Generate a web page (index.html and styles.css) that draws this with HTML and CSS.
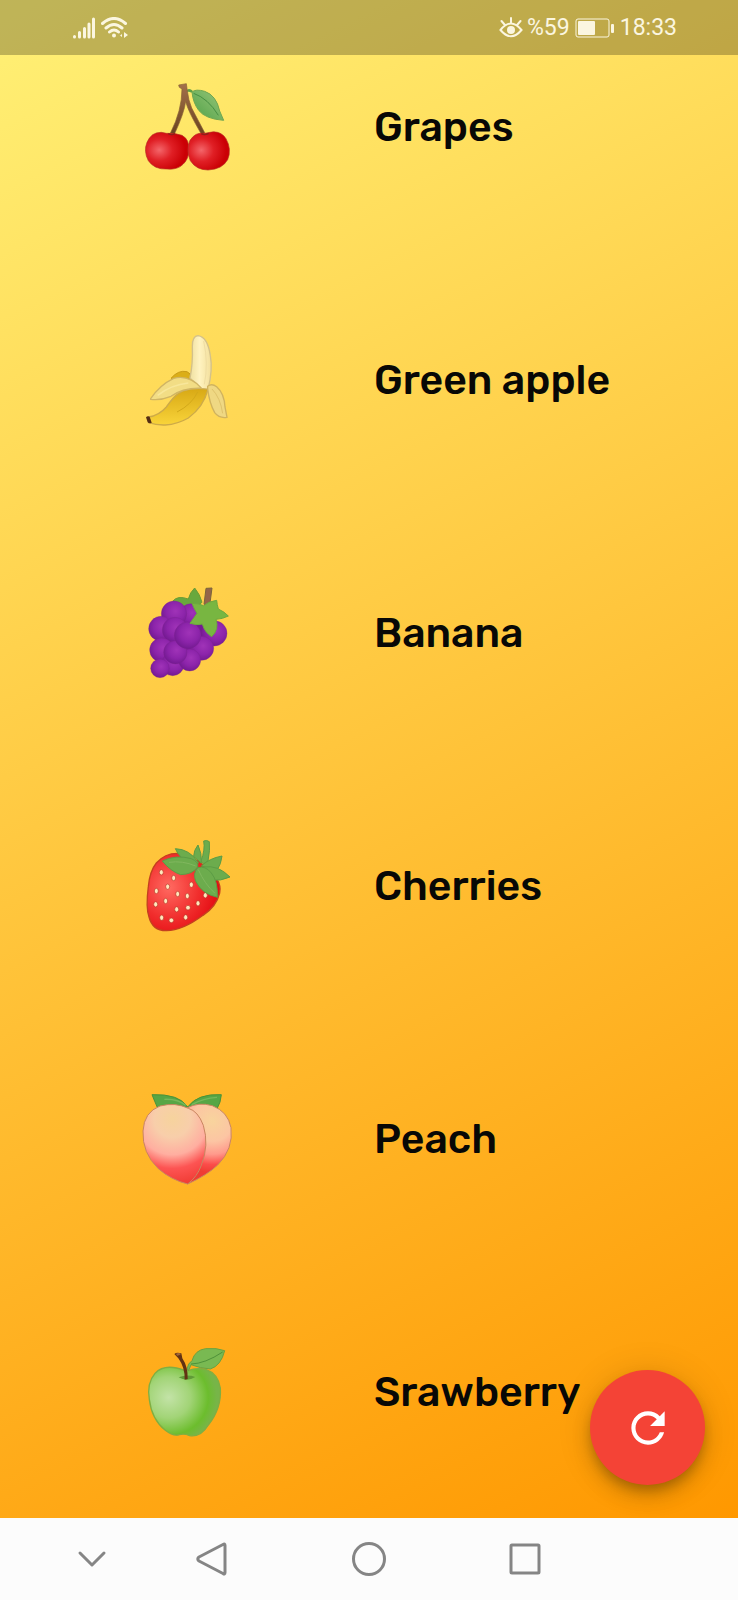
FILE: index.html
```html
<!DOCTYPE html>
<html lang="en">
<head>
<meta charset="utf-8">
<meta name="viewport" content="width=device-width, initial-scale=1">
<title>Fruits</title>
<link rel="stylesheet" href="styles.css">
</head>
<body>
<div class="app">
  <header class="status">
    <div class="status-group">
      <svg class="signal" viewBox="0 0 23 22" aria-hidden="true"><path d="M1.500 19.500v.5M6.500 15.500v4.500M11.500 11.500v8.500M16 7v13M20.500 2v18"/></svg>
      <svg class="wifi" viewBox="0 0 28 22" aria-hidden="true"><path d="M1.500 6.500Q13 -3.500 24.500 6.500M5 11Q13 4 21 11M8.500 15Q13 11 17.500 15"/><circle cx="13" cy="18.500" r="2"/><path class="solid" d="M23 15l4 3-4 3zM21 17l-2 1.500 2 1.500z"/></svg>
    </div>
    <div class="status-group">
      <svg class="eye" viewBox="0 0 24 22" aria-hidden="true"><path d="M1.500 13Q12 0 22.500 13Q12 25.500 1.500 13zM12 5.500V1M5.500 7.500L2.500 4M18.500 7.500l3-3.500"/><circle cx="12" cy="13" r="4"/></svg>
      <span>%59</span>
      <svg class="battery" viewBox="0 0 40 20" aria-hidden="true"><rect class="case" x="1" y="1" width="33" height="18" rx="2"/><rect x="3" y="3" width="17" height="14" rx="1"/><rect x="36" y="6" width="3" height="9" rx="1"/></svg>
      <time>18:33</time>
    </div>
  </header>

  <main class="board">
    <div class="row">
      <svg class="fruit" viewBox="-14 4 360 330" role="img" aria-label="Cherries emoji">
        <defs>
          <radialGradient id="cherry" cx="32%" cy="48%" r="60%"><stop offset="0" stop-color="#f4666a"/><stop offset=".5" stop-color="#e01f25"/><stop offset="1" stop-color="#cb0005"/></radialGradient>
          <linearGradient id="leaf" x1="0" y1="1" x2="1" y2="0"><stop offset="0" stop-color="#4fa046"/><stop offset="1" stop-color="#9ac87c"/></linearGradient>
          <linearGradient id="stem" x1="0" y1="0" x2="0" y2="1"><stop offset="0" stop-color="#a3714b"/><stop offset="1" stop-color="#69431f"/></linearGradient>
        </defs>
        <path d="M172 57q8-6 18 4l-5 5q-7-5-12-2z" fill="#5f9e45"/>
        <path d="M187 64Q198 54 225 62Q260 74 270 121L282 149Q227 145 207 119Q190 96 187 64z" fill="url(#leaf)" stroke="#6fa751" stroke-width="3"/>
        <path d="M192 68Q236 84 266 134" fill="none" stroke="#478f42" stroke-width="3"/>
        <path d="M147 43l23-4 3 22q3 27 13 51l40 76-10 4q-42-72-48-100-4 34-34 99l-12-3Q157 118 157 55l-8-5z" fill="url(#stem)" stroke="#8a6234" stroke-width="2"/>
        <path d="M110 188Q135 186 157 194Q181 207 177 240Q177 265 160 281Q144 298 112 295Q74 297 56 270Q41 242 52 215Q65 184 95 185z" fill="url(#cherry)" stroke="#b53124" stroke-width="2"/>
        <path d="M235 186Q271 176 289 204Q307 236 294 267Q278 296 235 298Q200 298 182 270Q168 238 181 209Q198 183 225 188z" fill="url(#cherry)" stroke="#b53124" stroke-width="2"/>
        <path d="M116 189q10 6 20 0M215 189q10 6 22-1" fill="none" stroke="#8d201b" stroke-width="4"/>
      </svg>
      <span class="name">Grapes</span>
    </div>
    <div class="row">
      <svg class="fruit" viewBox="-14 -1 360 330" role="img" aria-label="Banana emoji">
        <defs>
          <linearGradient id="flesh" x1="0" y1="0" x2="1" y2="0"><stop offset="0" stop-color="#efe0a0"/><stop offset=".45" stop-color="#fff3c1"/><stop offset="1" stop-color="#f3df9b"/></linearGradient>
          <linearGradient id="peel" x1="0" y1="0" x2="0" y2="1"><stop offset="0" stop-color="#d8a915"/><stop offset="1" stop-color="#f9d43a"/></linearGradient>
        </defs>
        <path d="M124 159q22-26 48-20 12 5 13 18l-14 5z" fill="#dbae18" stroke="#c99c18" stroke-width="3"/>
        <path d="M181 158Q190 115 188 63Q188 32 205 31Q234 35 242 91Q250 134 235 192L210 190z" fill="url(#flesh)" stroke="#d3c18b" stroke-width="4"/>
        <path d="M222 47q15 68 2 130" fill="none" stroke="#efdda2" stroke-width="3"/>
        <path d="M56 275Q88 271 110 245Q132 213 147 204Q175 185 235 192Q222 244 176 278Q143 297 107 299Q81 300 57 292z" fill="url(#peel)" stroke="#cdaa48" stroke-width="4"/>
        <path d="M204 200q-18 38-62 60" fill="none" stroke="#d3a91a" stroke-width="3"/>
        <path d="M63 220Q90 179 132 159Q178 147 216 189Q159 187 124 213Q92 226 63 222z" fill="#f2dd85" stroke="#d0b564" stroke-width="4"/>
        <path d="M84 210q41-32 92-37" fill="none" stroke="#f8e79b" stroke-width="5"/>
        <path d="M234 183Q246 173 261 184Q284 204 286 245L292 276Q269 280 255 262Q239 233 234 190z" fill="#efd883" stroke="#d0b35f" stroke-width="4"/>
        <path d="M247 191q25 26 32 73" fill="none" stroke="#dfc36c" stroke-width="3"/>
        <path d="M49 276q5-6 11-2l6 18q-7 4-12-1z" fill="#542d13"/>
      </svg>
      <span class="name">Green apple</span>
    </div>
    <div class="row">
      <svg class="fruit" viewBox="-14 8 360 330" role="img" aria-label="Grapes emoji">
        <defs>
          <radialGradient id="grape" cx="56%" cy="40%" r="60%"><stop offset="0" stop-color="#a033b8"/><stop offset=".6" stop-color="#8c24aa"/><stop offset="1" stop-color="#741a92"/></radialGradient>
        </defs>
        <path d="M129 78Q143 59 176 71Q181 51 195 38Q211 57 217 81L184 106L151 88z" fill="#69a83d" stroke="#6d9b35" stroke-width="3"/>
        <path d="M110 120h130l10 60-70 80-70 20-20-60z" fill="#741a92"/>
        <g fill="url(#grape)" stroke="#7c2290" stroke-width="1">
          <circle cx="254" cy="174" r="38"/><circle cx="184" cy="119" r="34"/>
          <circle cx="133" cy="115" r="38"/><circle cx="94" cy="160" r="37"/>
          <circle cx="136" cy="164" r="38"/><circle cx="96" cy="224" r="36"/>
          <circle cx="129" cy="267" r="34"/><circle cx="91" cy="279" r="28"/>
          <circle cx="216" cy="219" r="36"/><circle cx="180" cy="254" r="33"/>
          <circle cx="137" cy="231" r="35"/><circle cx="174" cy="180" r="40"/>
        </g>
        <path d="M229 39l18-1-6 45q-9 8-18 4z" fill="#946449" stroke="#7b643b" stroke-width="3"/>
        <path d="M181 144Q194 126 202 114Q192 98 187 84Q207 84 222 91Q237 78 261 75Q262 88 266 101Q284 109 296 122Q279 131 259 132Q269 162 246 184Q225 171 218 146Q202 151 181 144z" fill="#78b641" stroke="#6ca83f" stroke-width="3"/>
      </svg>
      <span class="name">Banana</span>
    </div>
    <div class="row">
      <svg class="fruit" viewBox="-14 2 360 330" role="img" aria-label="Strawberry emoji">
        <defs>
          <radialGradient id="berry" cx="30%" cy="44%" r="68%"><stop offset="0" stop-color="#ff6a61"/><stop offset=".6" stop-color="#f12e2d"/><stop offset="1" stop-color="#e40c13"/></radialGradient>
        </defs>
        <path d="M148 69Q107 67 80 98Q60 123 56 169Q48 231 58 260Q69 302 111 301Q158 301 220 255Q260 229 270 188Q275 166 260 143L208 93z" fill="url(#berry)" stroke="#c4401f" stroke-width="4"/>
        <g fill="#ffe8bd" stroke="#b9382b" stroke-width="2">
          <ellipse cx="95" cy="126" rx="6" ry="8"/><ellipse cx="132" cy="143" rx="6" ry="8"/><ellipse cx="114" cy="169" rx="6" ry="8"/><ellipse cx="80" cy="182" rx="6" ry="8"/><ellipse cx="78" cy="222" rx="6" ry="8"/><ellipse cx="108" cy="212" rx="6" ry="8"/><ellipse cx="144" cy="191" rx="6" ry="8"/><ellipse cx="185" cy="163" rx="6" ry="8"/><ellipse cx="173" cy="197" rx="6" ry="8"/><ellipse cx="141" cy="237" rx="6" ry="8"/><ellipse cx="96" cy="262" rx="6" ry="8"/><ellipse cx="125" cy="270" rx="7" ry="7"/><ellipse cx="168" cy="261" rx="6" ry="8"/><ellipse cx="175" cy="232" rx="7" ry="7"/><ellipse cx="205" cy="219" rx="6" ry="8"/><ellipse cx="227" cy="195" rx="6" ry="8"/>
        </g>
        <g fill="#6cac4d" stroke="#5c9c45" stroke-width="3">
          <path d="M222 32q9-4 17 2 3 23-4 58l-14 9-7-9q13-35 8-60z"/>
          <path d="M192 78Q192 60 205 44Q217 69 215 98z"/>
          <path d="M137 55Q180 56 207 98L186 101Q149 85 137 55z"/>
          <path d="M215 107Q239 84 277 77Q275 100 261 122z"/>
          <path d="M222 110Q265 103 301 140Q274 153 242 149z"/>
          <path d="M98 92Q139 72 185 85Q208 95 204 110Q189 132 153 133Q123 123 98 92z"/>
          <path d="M204 112Q227 105 245 128Q265 152 263 201Q216 190 199 154Q188 130 204 112z"/>
        </g>
        <path d="M118 96q40-6 80 11M206 118q19 43 49 70" fill="none" stroke="#80b75e" stroke-width="3"/>
      </svg>
      <span class="name">Cherries</span>
    </div>
    <div class="row">
      <svg class="fruit" viewBox="-14 10 360 330" role="img" aria-label="Peach emoji">
        <defs>
          <radialGradient id="peach" gradientUnits="userSpaceOnUse" cx="128" cy="115" r="195"><stop offset="0" stop-color="#f6d39d"/><stop offset=".28" stop-color="#f8ceaa"/><stop offset=".55" stop-color="#ffaea0"/><stop offset=".76" stop-color="#fd5453"/><stop offset="1" stop-color="#f13d36"/></radialGradient>
          <radialGradient id="peachBack" gradientUnits="userSpaceOnUse" cx="248" cy="120" r="155"><stop offset="0" stop-color="#f8d49d"/><stop offset=".4" stop-color="#fcc5a3"/><stop offset=".65" stop-color="#ff9a8c"/><stop offset=".85" stop-color="#fb4d4a"/><stop offset="1" stop-color="#ef3c34"/></radialGradient>
        </defs>
        <path d="M67 42Q148 39 174 79L119 85L83 80Q75 62 67 42z" fill="#57a645" stroke="#4c9238" stroke-width="3"/>
        <path d="M174 79Q204 38 275 42Q273 66 263 82L219 87z" fill="#57a645" stroke="#4c9238" stroke-width="3"/>
        <path d="M172 82Q206 63 248 75Q295 93 304 141Q312 205 264 253Q233 283 174 310z" fill="url(#peachBack)" stroke="#c98560" stroke-width="3"/>
        <path d="M174 310Q125 298 86 264Q37 217 40 151Q43 94 91 76Q137 64 176 83Q205 91 221 134Q239 193 215 254Q203 288 174 310z" fill="url(#peach)" stroke="#c98560" stroke-width="3"/>
        <path d="M104 56q39-2 64 18M186 72q35-20 76-22" fill="none" stroke="#76b75b" stroke-width="4"/>
      </svg>
      <span class="name">Peach</span>
    </div>
    <div class="row">
      <svg class="fruit" viewBox="-14 4 360 330" role="img" aria-label="Green apple emoji">
        <defs>
          <radialGradient id="apple" cx="28%" cy="44%" r="67%"><stop offset="0" stop-color="#c3e3a7"/><stop offset=".45" stop-color="#a2d477"/><stop offset=".82" stop-color="#6cbd2d"/><stop offset="1" stop-color="#77b548"/></radialGradient>
        </defs>
        <path d="M164 104Q105 82 76 113Q51 142 59 191Q66 251 107 284Q131 303 149 297Q164 293 180 300Q214 305 236 268Q276 218 272 157Q265 114 230 102Q202 94 175 105z" fill="url(#apple)" stroke="#7fae42" stroke-width="4"/>
        <path d="M147 125q25 15 50-1-24-9-50 1z" fill="#609b37"/>
        <path d="M172 101Q174 83 187 75Q196 43 228 39Q262 36 285 45Q274 90 242 100Q211 98 184 87L177 104z" fill="#79b952" stroke="#6aa140" stroke-width="3"/>
        <path d="M184 85Q226 84 279 49" fill="none" stroke="#4f9139" stroke-width="3"/>
        <path d="M134 55q7-7 21-2l3 15q17 25 16 62l-9 2q1-37-19-64z" fill="#633213"/>
        <path d="M139 54q9-5 15 1-5 5-12 5z" fill="#a0663a"/>
      </svg>
      <span class="name">Srawberry</span>
    </div>
    <button class="refresh" type="button" aria-label="Restart">
      <svg viewBox="0 0 24 24" aria-hidden="true"><path d="M17.650 6.350C16.200 4.900 14.210 4 12 4c-4.420 0-7.990 3.580-7.990 8s3.570 8 7.990 8c3.730 0 6.840-2.550 7.730-6h-2.080c-.82 2.330-3.040 4-5.650 4-3.310 0-6-2.690-6-6s2.690-6 6-6c1.660 0 3.140.69 4.220 1.780L13 11h7V4l-2.350 2.350z"/></svg>
    </button>
  </main>

  <nav class="keys" aria-label="System">
    <button type="button" aria-label="Hide bar"><svg viewBox="0 0 36 36" aria-hidden="true"><path d="M6 12l12 12 12-12"/></svg></button>
    <button type="button" aria-label="Back"><svg viewBox="0 0 36 36" aria-hidden="true"><path d="M29 3.500Q31 2 31 4.500V31.500Q31 34 29 32.500L5 20Q2.500 18 5 16z"/></svg></button>
    <button type="button" aria-label="Home"><svg viewBox="0 0 36 36" aria-hidden="true"><circle cx="18" cy="18" r="15.500"/></svg></button>
    <button type="button" aria-label="Recent apps"><svg viewBox="0 0 36 36" aria-hidden="true"><rect x="4" y="4" width="28" height="28" rx="1"/></svg></button>
  </nav>
</div>
</body>
</html>
```
FILE: styles.css
```css
* {
  box-sizing: border-box;
}

body {
  margin: 0;
  font-family: Rubik, Inter, "Liberation Sans", sans-serif;
  color: #080806;
}

button {
  display: grid;
  place-items: center;
  padding: 0;
  border: 0;
  background: none;
  cursor: pointer;
}

.app {
  position: relative;
  display: flex;
  flex-direction: column;
  min-height: 100vh;
}

/* Translucent system bar over the top of the board */
.status {
  position: absolute;
  inset: 0 0 auto;
  z-index: 1;
  display: flex;
  align-items: center;
  justify-content: space-between;
  height: 55px;
  padding: 1px 61px 0 73px;
  background: rgba(0, 0, 0, 0.25);
  color: #fbf6e0;
  font: 400 23px/28px Roboto, sans-serif;
}

.status-group {
  display: flex;
  align-items: center;
  gap: 5px;
}

.status svg {
  fill: #fbf6e0;
  stroke: #fbf6e0;
  stroke-width: 0;
}

.signal {
  width: 23px;
  height: 22px;
}

.signal path {
  stroke-width: 3px;
  stroke-linecap: round;
}

.wifi {
  width: 28px;
  height: 22px;
}

.wifi path:not(.solid),
.eye path {
  fill: none;
  stroke-width: 2px;
  stroke-linecap: round;
}

.wifi path:not(.solid) {
  stroke-width: 3px;
}

.eye {
  width: 24px;
  height: 22px;
  margin-right: -1px;
}

.battery {
  width: 40px;
  height: 20px;
}

.battery .case {
  fill: none;
  stroke-width: 1px;
}

.board {
  position: relative;
  flex: 1;
  display: grid;
  grid-auto-rows: minmax(253px, 1fr);
  background: linear-gradient(154deg, #fff176, #ff9800);
}

.row {
  display: grid;
  grid-template-columns: 1fr 1fr;
  align-items: center;
}

.fruit {
  width: 120px;
  height: 110px;
  justify-self: center;
}

.name {
  padding-left: 5px;
  font-size: 41px;
  line-height: 50px;
  font-weight: 500;
}

.refresh {
  position: absolute;
  right: 33px;
  bottom: 33px;
  width: 115px;
  height: 115px;
  border-radius: 50%;
  background: #f44336;
  box-shadow: 0 7px 11px -2px rgba(0, 0, 0, 0.2), 0 12px 20px rgba(0, 0, 0, 0.14), 0 2px 36px rgba(0, 0, 0, 0.12);
}

.refresh svg {
  width: 50px;
  height: 50px;
  fill: #fff;
}

.keys {
  display: grid;
  grid-template-columns: 84fr 156fr 156fr 156fr;
  height: 82px;
  padding: 0 135px 0 50px;
  background: #fcfcfc;
}

.keys svg {
  width: 36px;
  height: 36px;
  fill: none;
  stroke: #858585;
  stroke-width: 3px;
  stroke-linecap: round;
  stroke-linejoin: round;
}
```
